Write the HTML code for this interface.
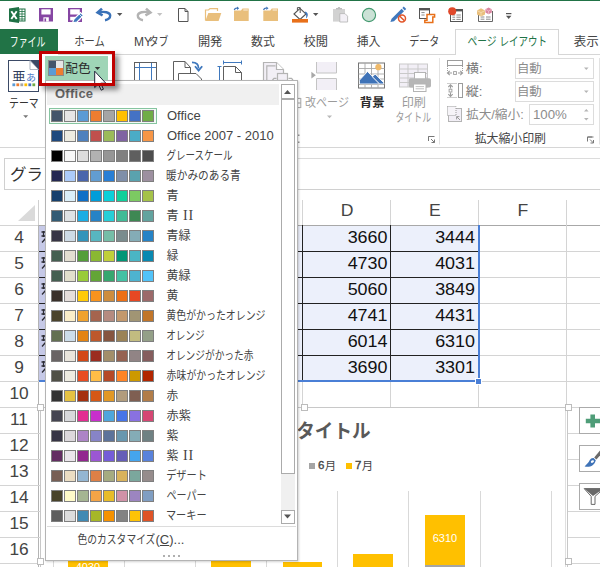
<!DOCTYPE html><html><head><meta charset="utf-8"><title>Excel</title><style>

html,body{margin:0;padding:0;}
body{width:600px;height:567px;overflow:hidden;background:#fff;position:relative;font-family:"Liberation Sans",sans-serif;}
#r{position:absolute;left:0;top:0;width:600px;height:567px;overflow:hidden;}
#r div,#r i{position:absolute;display:block;}
.t{white-space:nowrap;}
.ov{position:absolute;left:0;top:0;}
.ov text{font-family:"Liberation Sans","Noto Sans CJK JP",sans-serif;}
.sw{width:12px;height:12px;box-sizing:border-box;border:1px solid #7f7f7f;}

</style></head><body>
<div id="r">
<div style="left:0px;top:0px;width:600px;height:1px;background:#217346;"></div><div style="left:0px;top:29px;width:58px;height:25px;background:#217346;"></div><div style="left:58px;top:54px;width:542px;height:1px;background:#d6d6d6;"></div><div style="left:455px;top:29px;width:104px;height:26px;background:#fff;border:1px solid #d6d6d6;border-bottom:none;box-sizing:border-box;"></div><div style="left:0px;top:147px;width:600px;height:1px;background:#d6d6d6;"></div><div style="left:64px;top:158px;width:536px;height:1px;background:#dcdcdc;"></div><div style="left:64px;top:189px;width:536px;height:1px;background:#d0d0d0;"></div><div style="left:4px;top:158px;width:60px;height:32px;background:#fff;border:1px solid #d0d0d0;box-sizing:border-box;"></div><div style="left:514.5px;top:57.5px;width:79.5px;height:21.5px;background:#fff;border:1px solid #dcdcdc;box-sizing:border-box;"></div><div style="left:514.5px;top:80.5px;width:79.5px;height:21.5px;background:#fff;border:1px solid #dcdcdc;box-sizing:border-box;"></div><div style="left:528.5px;top:104px;width:65.5px;height:21px;background:#fff;border:1px solid #dcdcdc;box-sizing:border-box;"></div><div class="t " style="left:533px;top:108.5px;font-size:12.5px;line-height:12.5px;color:#8c8c8c;transform:scaleX(1.06);transform-origin:left center;">100%</div><div class="t " style="left:134px;top:35.5px;font-size:12px;line-height:12px;color:#444;">MY</div>
<div style="left:0px;top:225px;width:39px;height:1px;background:#d4d4d4;"></div><div style="left:39px;top:225px;width:561px;height:1px;background:#a8a8a8;"></div><div style="left:38px;top:200px;width:1px;height:25px;background:#d0d0d0;"></div><div style="left:38px;top:225px;width:1px;height:342px;background:#b4b4b4;"></div><div style="left:126px;top:200px;width:1px;height:25px;background:#d4d4d4;"></div><div style="left:214px;top:200px;width:1px;height:25px;background:#d4d4d4;"></div><div style="left:302px;top:200px;width:1px;height:25px;background:#d4d4d4;"></div><div style="left:390px;top:200px;width:1px;height:25px;background:#d4d4d4;"></div><div style="left:478px;top:200px;width:1px;height:25px;background:#d4d4d4;"></div><div style="left:566px;top:200px;width:1px;height:25px;background:#d4d4d4;"></div><div style="left:654px;top:200px;width:1px;height:25px;background:#d4d4d4;"></div><div style="left:0px;top:251px;width:600px;height:1px;background:#d4d4d4;"></div><div style="left:0px;top:277px;width:600px;height:1px;background:#d4d4d4;"></div><div style="left:0px;top:303px;width:600px;height:1px;background:#d4d4d4;"></div><div style="left:0px;top:329px;width:600px;height:1px;background:#d4d4d4;"></div><div style="left:0px;top:355px;width:600px;height:1px;background:#d4d4d4;"></div><div style="left:0px;top:381px;width:600px;height:1px;background:#d4d4d4;"></div><div style="left:0px;top:407px;width:600px;height:1px;background:#d4d4d4;"></div><div style="left:0px;top:433px;width:600px;height:1px;background:#d4d4d4;"></div><div style="left:0px;top:459px;width:600px;height:1px;background:#d4d4d4;"></div><div style="left:0px;top:485px;width:600px;height:1px;background:#d4d4d4;"></div><div style="left:0px;top:511px;width:600px;height:1px;background:#d4d4d4;"></div><div style="left:0px;top:537px;width:600px;height:1px;background:#d4d4d4;"></div><div style="left:0px;top:563px;width:600px;height:1px;background:#d4d4d4;"></div><div style="left:0px;top:589px;width:600px;height:1px;background:#d4d4d4;"></div><div style="left:126px;top:225px;width:1px;height:342px;background:#d4d4d4;"></div><div style="left:214px;top:225px;width:1px;height:342px;background:#d4d4d4;"></div><div style="left:302px;top:225px;width:1px;height:342px;background:#d4d4d4;"></div><div style="left:390px;top:225px;width:1px;height:342px;background:#d4d4d4;"></div><div style="left:478px;top:225px;width:1px;height:342px;background:#d4d4d4;"></div><div style="left:566px;top:225px;width:1px;height:342px;background:#d4d4d4;"></div><div style="left:654px;top:225px;width:1px;height:342px;background:#d4d4d4;"></div><div class="t " style="left:327px;top:203px;font-size:16px;line-height:16px;color:#444;width:40px;text-align:center;transform:scaleX(1.1);">D</div><div class="t " style="left:415px;top:203px;font-size:16px;line-height:16px;color:#444;width:40px;text-align:center;transform:scaleX(1.1);">E</div><div class="t " style="left:503px;top:203px;font-size:16px;line-height:16px;color:#444;width:40px;text-align:center;transform:scaleX(1.1);">F</div><div class="t " style="left:0px;top:230px;font-size:16px;line-height:16px;color:#444;width:38px;text-align:center;transform:scaleX(1.08);">4</div><div class="t " style="left:0px;top:256px;font-size:16px;line-height:16px;color:#444;width:38px;text-align:center;transform:scaleX(1.08);">5</div><div class="t " style="left:0px;top:282px;font-size:16px;line-height:16px;color:#444;width:38px;text-align:center;transform:scaleX(1.08);">6</div><div class="t " style="left:0px;top:308px;font-size:16px;line-height:16px;color:#444;width:38px;text-align:center;transform:scaleX(1.08);">7</div><div class="t " style="left:0px;top:334px;font-size:16px;line-height:16px;color:#444;width:38px;text-align:center;transform:scaleX(1.08);">8</div><div class="t " style="left:0px;top:360px;font-size:16px;line-height:16px;color:#444;width:38px;text-align:center;transform:scaleX(1.08);">9</div><div class="t " style="left:0px;top:386px;font-size:16px;line-height:16px;color:#444;width:38px;text-align:center;transform:scaleX(1.08);">10</div><div class="t " style="left:0px;top:412px;font-size:16px;line-height:16px;color:#444;width:38px;text-align:center;transform:scaleX(1.08);">11</div><div class="t " style="left:0px;top:438px;font-size:16px;line-height:16px;color:#444;width:38px;text-align:center;transform:scaleX(1.08);">12</div><div class="t " style="left:0px;top:464px;font-size:16px;line-height:16px;color:#444;width:38px;text-align:center;transform:scaleX(1.08);">13</div><div class="t " style="left:0px;top:490px;font-size:16px;line-height:16px;color:#444;width:38px;text-align:center;transform:scaleX(1.08);">14</div><div class="t " style="left:0px;top:516px;font-size:16px;line-height:16px;color:#444;width:38px;text-align:center;transform:scaleX(1.08);">15</div><div class="t " style="left:0px;top:542px;font-size:16px;line-height:16px;color:#444;width:38px;text-align:center;transform:scaleX(1.08);">16</div><div style="left:39px;top:226px;width:440px;height:155px;background:#ecf0fb;"></div><div style="left:39px;top:226px;width:8px;height:155px;background:#c6c9e7;"></div><div style="left:39px;top:251px;width:440px;height:1px;background:#222;"></div><div style="left:39px;top:277px;width:440px;height:1px;background:#222;"></div><div style="left:39px;top:303px;width:440px;height:1px;background:#222;"></div><div style="left:39px;top:329px;width:440px;height:1px;background:#222;"></div><div style="left:39px;top:355px;width:440px;height:1px;background:#222;"></div><div style="left:39px;top:381px;width:440px;height:1px;background:#222;"></div><div style="left:302px;top:225px;width:1px;height:156px;background:#222;"></div><div style="left:390px;top:225px;width:1px;height:156px;background:#222;"></div><div class="t " style="left:302px;top:230px;font-size:16px;line-height:16px;color:#111;width:85.5px;text-align:right;transform:scaleX(1.12);transform-origin:right center;">3660</div><div class="t " style="left:390px;top:230px;font-size:16px;line-height:16px;color:#111;width:85px;text-align:right;transform:scaleX(1.12);transform-origin:right center;">3444</div><div class="t " style="left:302px;top:256px;font-size:16px;line-height:16px;color:#111;width:85.5px;text-align:right;transform:scaleX(1.12);transform-origin:right center;">4730</div><div class="t " style="left:390px;top:256px;font-size:16px;line-height:16px;color:#111;width:85px;text-align:right;transform:scaleX(1.12);transform-origin:right center;">4031</div><div class="t " style="left:302px;top:282px;font-size:16px;line-height:16px;color:#111;width:85.5px;text-align:right;transform:scaleX(1.12);transform-origin:right center;">5060</div><div class="t " style="left:390px;top:282px;font-size:16px;line-height:16px;color:#111;width:85px;text-align:right;transform:scaleX(1.12);transform-origin:right center;">3849</div><div class="t " style="left:302px;top:308px;font-size:16px;line-height:16px;color:#111;width:85.5px;text-align:right;transform:scaleX(1.12);transform-origin:right center;">4741</div><div class="t " style="left:390px;top:308px;font-size:16px;line-height:16px;color:#111;width:85px;text-align:right;transform:scaleX(1.12);transform-origin:right center;">4431</div><div class="t " style="left:302px;top:334px;font-size:16px;line-height:16px;color:#111;width:85.5px;text-align:right;transform:scaleX(1.12);transform-origin:right center;">6014</div><div class="t " style="left:390px;top:334px;font-size:16px;line-height:16px;color:#111;width:85px;text-align:right;transform:scaleX(1.12);transform-origin:right center;">6310</div><div class="t " style="left:302px;top:360px;font-size:16px;line-height:16px;color:#111;width:85.5px;text-align:right;transform:scaleX(1.12);transform-origin:right center;">3690</div><div class="t " style="left:390px;top:360px;font-size:16px;line-height:16px;color:#111;width:85px;text-align:right;transform:scaleX(1.12);transform-origin:right center;">3301</div><div style="left:478px;top:225px;width:2px;height:157px;background:#4a7fd6;"></div><div style="left:39px;top:380px;width:441px;height:2px;background:#4a7fd6;"></div><div style="left:475px;top:378px;width:7px;height:7px;background:#fff;"></div><div style="left:476px;top:379px;width:5px;height:5px;background:#4a7fd6;"></div>
<svg class="ov" width="600" height="567" viewBox="0 0 600 567"><text x="9.71" y="46.29" font-size="12.6" fill="#fff" textLength="35.7" lengthAdjust="spacingAndGlyphs">ファイル</text><text x="74.18" y="46.06" font-size="12" fill="#444" textLength="30.5" lengthAdjust="spacingAndGlyphs">ホーム</text><text x="149.12" y="46.06" font-size="12" fill="#444" textLength="19.2" lengthAdjust="spacingAndGlyphs">タブ</text><text x="197.91" y="46.06" font-size="12" fill="#444" textLength="24.4" lengthAdjust="spacingAndGlyphs">開発</text><text x="251.10" y="46.06" font-size="12" fill="#444" textLength="23.8" lengthAdjust="spacingAndGlyphs">数式</text><text x="303.61" y="46.06" font-size="12" fill="#444" textLength="24.4" lengthAdjust="spacingAndGlyphs">校閲</text><text x="356.68" y="46.06" font-size="12" fill="#444" textLength="23.7" lengthAdjust="spacingAndGlyphs">挿入</text><text x="409.15" y="46.06" font-size="12" fill="#444" textLength="30.1" lengthAdjust="spacingAndGlyphs">データ</text><text x="467.49" y="46.06" font-size="12" fill="#217346" textLength="29.1" lengthAdjust="spacingAndGlyphs">ページ</text><text x="499.39" y="46.06" font-size="12" fill="#217346" textLength="47.6" lengthAdjust="spacingAndGlyphs">レイアウト</text><text x="573.65" y="46.06" font-size="12" fill="#444" textLength="25.1" lengthAdjust="spacingAndGlyphs">表示</text><text x="10.04" y="179.58" font-size="16" fill="#333" textLength="33" lengthAdjust="spacingAndGlyphs">グラ</text><path d="M35 205 L35 221 L18 221 Z" fill="#dadada"/><path d="M41.5 232 H45.5 M41.5 236 H45.5 M42 242.5 L45.5 238.5 M43.5 231 V237" stroke="#2b2b33" stroke-width="1.3" fill="none"/><path d="M41.5 258 H45.5 M41.5 262 H45.5 M42 268.5 L45.5 264.5 M43.5 257 V263" stroke="#2b2b33" stroke-width="1.3" fill="none"/><path d="M41.5 284 H45.5 M41.5 288 H45.5 M42 294.5 L45.5 290.5 M43.5 283 V289" stroke="#2b2b33" stroke-width="1.3" fill="none"/><path d="M41.5 310 H45.5 M41.5 314 H45.5 M42 320.5 L45.5 316.5 M43.5 309 V315" stroke="#2b2b33" stroke-width="1.3" fill="none"/><path d="M41.5 336 H45.5 M41.5 340 H45.5 M42 346.5 L45.5 342.5 M43.5 335 V341" stroke="#2b2b33" stroke-width="1.3" fill="none"/><path d="M41.5 362 H45.5 M41.5 366 H45.5 M42 372.5 L45.5 368.5 M43.5 361 V367" stroke="#2b2b33" stroke-width="1.3" fill="none"/><path d="M9 8.6 L19 7 L19 23 L9 21.4 Z" fill="#1e7145"/><path d="M11.3 11.2 L16.7 19 M16.7 11.2 L11.3 19" stroke="#fff" stroke-width="1.9" fill="none"/><rect x="19" y="9" width="6" height="12" fill="#fff" stroke="#1e7145" stroke-width="1"/><path d="M19 11.5H25M19 14H25M19 16.5H25M19 19H25M22 9V21" stroke="#1e7145" stroke-width="0.8" fill="none"/><rect x="39" y="8" width="14" height="13.5" fill="#8646a3"/><rect x="41.4" y="9.3" width="9.2" height="5.2" fill="#fff"/><rect x="43.4" y="17.3" width="5.4" height="4.2" fill="#fff"/><rect x="44.5" y="18.4" width="1.6" height="3.1" fill="#8646a3"/><rect x="68" y="8" width="14" height="14" fill="#8646a3"/><rect x="70.2" y="9.3" width="9.6" height="5.2" fill="#fff"/><rect x="70.2" y="16.8" width="10" height="3.6" fill="#fff"/><path d="M72.5 22.8 L74 19 L80.5 12.5 L83.5 15.5 L77 22 Z" fill="#3f78bd" stroke="#fff" stroke-width="1.2"/><path d="M79 14 L82 17" stroke="#fff" stroke-width="0.8"/><path d="M102 8.6 L97.6 12.6 L102.6 15.4" fill="none" stroke="#3a72b8" stroke-width="2.6" stroke-linejoin="miter"/><path d="M98.5 12.4 C104 11.2 110.2 12.2 110.2 15.6 C110.2 18.6 107.6 19.8 105 20.2" fill="none" stroke="#3a72b8" stroke-width="2.4"/><path d="M117 13 L122.4 13 L119.7 16 Z" fill="#555"/><path d="M146 8.6 L150.4 12.6 L145.4 15.4" fill="none" stroke="#b3b3b3" stroke-width="2.6"/><path d="M149.5 12.4 C144 11.2 137.8 12.2 137.8 15.6 C137.8 18.6 140.4 19.8 143 20.2" fill="none" stroke="#b3b3b3" stroke-width="2.4"/><path d="M157 13 L162.4 13 L159.7 16 Z" fill="#c3c3c3"/><path d="M178.5 8.5 H185 L188 11.5 V21.5 H178.5 Z" fill="#fff" stroke="#555" stroke-width="1"/><path d="M185 8.5 V11.5 H188" fill="none" stroke="#555" stroke-width="1"/><path d="M205.5 20.5 V10 H208.5 L210 8.6 H217.5 V11" fill="none" stroke="#e9bf7c" stroke-width="1.2"/><path d="M205.3 21 L208.3 13 H221.3 L218.6 21 Z" fill="#e9bf7c"/><path d="M234 21 V10.6 H241 L242.5 8.4 H248.7 V21 Z" fill="#e9bf7c"/><path d="M243.3 10 H247.8" stroke="#fff" stroke-width="0.8"/><path d="M234.3 10 C234.8 8.4 236 8 237.4 8.2" fill="none" stroke="#3f73b7" stroke-width="1.3"/><path d="M237 6.4 L239.2 8.2 L237 10 Z" fill="#3f73b7"/><path d="M263.3 21 V10.6 H270.3 L271.8 8.4 H278 V21 Z" fill="#e9bf7c"/><path d="M272.6 10 H277.1" stroke="#fff" stroke-width="0.8"/><path d="M263.6 10 C264.1 8.4 265.3 8 266.7 8.2" fill="none" stroke="#3f73b7" stroke-width="1.3"/><path d="M266.3 6.4 L268.5 8.2 L266.3 10 Z" fill="#3f73b7"/><path d="M294 14 L300 8.4 L306 14 L300 19.4 Z" fill="#fff" stroke="#555" stroke-width="1.1"/><path d="M300.2 13 V7.6 H297.4 V10.4" fill="none" stroke="#555" stroke-width="1"/><path d="M305.6 11.4 C308.6 13 308.4 16.2 306 18.4 C306.4 16 306.4 14 304.6 12.6 Z" fill="#3f78bd"/><rect x="292" y="19" width="16" height="3.6" fill="#e8701a"/><path d="M313 13 L318.4 13 L315.7 16 Z" fill="#555"/><rect x="333" y="9" width="12" height="12.6" fill="#d2d2d2"/><path d="M336 9.4 V8 H337.8 C337.8 6.6 340.2 6.6 340.2 8 H342 V9.4 Z" fill="#bdbdbd"/><path d="M339.8 13.6 H345 L347.6 16.2 V22 H339.8 Z" fill="#f3f0f6" stroke="#b9b9b9" stroke-width="0.9"/><circle cx="369" cy="15" r="6.6" fill="#cbe2d6" stroke="#43996f" stroke-width="1.1"/><path d="M390.4 22 L391.6 18.8 L401.6 8.8 L404 11.2 L394 21.2 Z" fill="#3f78bd"/><path d="M402.4 8 L403.8 6.6 L406.2 9 L404.8 10.4 Z" fill="#3f78bd"/><circle cx="402" cy="18.4" r="3.5" fill="#fff" stroke="#e2572b" stroke-width="1.5"/><path d="M399.6 16 L404.4 20.8" stroke="#e2572b" stroke-width="1.5"/><rect x="419.5" y="8.5" width="10" height="10" fill="#fff" stroke="#555" stroke-width="1"/><rect x="419" y="8" width="11" height="2.4" fill="#555"/><path d="M421.4 12.6 H424.6 M421.4 15 H424.6" stroke="#8a8a8a" stroke-width="1"/><path d="M427 14.6 H434.6 V17 H432.8 V22.4 H424.8 V20.2 H427 Z" fill="#fff" stroke="#e8701a" stroke-width="1.5"/><rect x="450.5" y="9.5" width="12" height="12" fill="#fff" stroke="#555" stroke-width="1"/><rect x="450" y="9" width="13" height="2.4" fill="#555"/><path d="M452.4 15 H455.2 M456.4 15 H460.8 M452.4 17.2 H455.2 M456.4 17.2 H460.8 M452.4 19.4 H455.2 M456.4 19.4 H460.8" stroke="#8a8a8a" stroke-width="1"/><circle cx="452.2" cy="11.2" r="4" fill="#e0482a"/><path d="M478.5 14 V21.5 H492.5 V11" fill="none" stroke="#666" stroke-width="1"/><path d="M480.6 17 H484.4 M486 17 H490.6 M480.6 19.2 H484.4 M486 19.2 H490.6" stroke="#8a8a8a" stroke-width="1"/><path d="M477 10.6 L481 8.2 L485 10.6 V14.6 L481 16.6 L477 14.6 Z" fill="#e9bf7c"/><path d="M477 10.6 L481 12.6 L485 10.6 M481 12.6 V16.6" stroke="#f7e3bf" stroke-width="0.7" fill="none"/><path d="M485.4 9.2 L488.6 7.4 L491.8 9.2 V12.4 L488.6 14.2 L485.4 12.4 Z" fill="#d9849f"/><path d="M485.4 9.2 L488.6 11 L491.8 9.2 M488.6 11 V14.2" stroke="#f3cbd7" stroke-width="0.7" fill="none"/><path d="M506 13.6 H511.4" stroke="#555" stroke-width="1.2"/><path d="M506 15.8 L511.4 15.8 L508.7 19 Z" fill="#555"/><rect x="8.5" y="60.5" width="30" height="31" fill="#fff" stroke="#3b4a66" stroke-width="1"/><path d="M30 60.5 H38.5 V69.5 Z" fill="#3b4a66"/><path d="M30 60.5 V69.5 H38.5 Z" fill="#fff" stroke="#9aa3b3" stroke-width="0.8"/><text x="12.36" y="81.25" font-size="12.5" fill="#2f3e5c" textLength="13.3" lengthAdjust="spacingAndGlyphs">亜</text><text x="25.90" y="81.42" font-size="9" fill="#4472c4" textLength="10" lengthAdjust="spacingAndGlyphs">あ</text><rect x="12.4" y="83.4" width="2.8" height="2.8" fill="#5b9bd5"/><rect x="16.4" y="83.4" width="2.8" height="2.8" fill="#ed7d31"/><rect x="20.4" y="83.4" width="2.8" height="2.8" fill="#a5a5a5"/><rect x="24.4" y="83.4" width="2.8" height="2.8" fill="#ffc000"/><rect x="28.4" y="83.4" width="2.8" height="2.8" fill="#4472c4"/><rect x="32.4" y="83.4" width="2.8" height="2.8" fill="#70ad47"/><text x="9.06" y="108.06" font-size="12" fill="#333" textLength="29.6" lengthAdjust="spacingAndGlyphs">テーマ</text><path d="M23.2 115.2 H28.2 L25.7 118 Z" fill="#777"/><rect x="134.5" y="62.5" width="22" height="28" fill="#fff" stroke="#5f5f5f" stroke-width="1"/><path d="M139.5 63 V90 M151.5 63 V90 M135 67.5 H156" stroke="#3f78bd" stroke-width="1" fill="none"/><path d="M173.5 90 V61.5 H185 L190.5 67.5 V74" fill="#fff" stroke="#5f5f5f" stroke-width="1"/><path d="M185 61.5 V67.5 H190.5" fill="none" stroke="#5f5f5f" stroke-width="1"/><path d="M178.5 90 V73.5 H196 L201.5 79 V90" fill="#fff" stroke="#5f5f5f" stroke-width="1"/><path d="M192 62.4 C196.6 62.4 198.6 64.6 198.6 68.4" fill="none" stroke="#3f78bd" stroke-width="1.8"/><path d="M195 66.2 L198.6 70.6 L202.2 66.2" fill="none" stroke="#3f78bd" stroke-width="1.8"/><path d="M223.5 90 V66.5 H235.5 L241.5 72.5 V90" fill="#fff" stroke="#5f5f5f" stroke-width="1"/><path d="M235.5 66.5 V72.5 H241.5" fill="none" stroke="#5f5f5f" stroke-width="1"/><path d="M223.5 62.5 H241.5 M223.5 60.5 V64.5 M241.5 60.5 V64.5 M219.5 66.5 V90 M217.5 66.5 H221.5" stroke="#3f78bd" stroke-width="1" fill="none"/><path d="M263.5 90 V62.5 H276.5 L283.5 69.5 V90" fill="#f2eff6" stroke="#b4b4b4" stroke-width="1.2"/><path d="M266.8 90 V65.8 H275.5" fill="none" stroke="#b4b4b4" stroke-width="1.2"/><path d="M276.5 62.5 V69.5 H283.5" fill="#fff" stroke="#b4b4b4" stroke-width="1.2"/><rect x="277.5" y="73.5" width="10" height="7" fill="#f2eff6" stroke="#b4b4b4" stroke-width="1.2"/><path d="M272.5 80 L274 78.4 H276.5 M293 80 L291.5 78.4 H288.5" fill="none" stroke="#b0b0b0" stroke-width="1.2"/><rect x="298" y="134.5" width="1.5" height="1.5" fill="#9a9a9a"/><rect x="298" y="141.5" width="1.5" height="1.5" fill="#9a9a9a"/><path d="M300.8 98 V108 M298 98.4 H300.8 M298 107.6 H300.8 M298 103 H300.8" stroke="#a5a5a5" stroke-width="1" fill="none"/><path d="M316.5 62 V73 H336.5 V62" fill="#f2eff6" stroke="#c4c4c4" stroke-width="1"/><path d="M316.5 90 V78.5 H336.5 V90" fill="#f2eff6" stroke="#c4c4c4" stroke-width="1"/><path d="M311.4 71.8 L315.8 75.2 L311.4 78.6 Z" fill="#a8a8a8"/><text x="305.10" y="107.26" font-size="12" fill="#9b9b9b" textLength="43.8" lengthAdjust="spacingAndGlyphs">改ページ</text><path d="M327 115.6 H332 L329.5 118.2 Z" fill="#b9b9b9"/><rect x="358.5" y="63" width="26" height="25" fill="#fff" stroke="#747474" stroke-width="1"/><path d="M358.5 68.5 H384.5 M358.5 74 H384.5 M358.5 79 H384.5 M365 63 V88 M371.5 63 V88 M378 63 V88" stroke="#a8a8a8" stroke-width="0.9" fill="none"/><path d="M358.5 84.5 H384.5" stroke="#8e8e8e" stroke-width="1" fill="none"/><path d="M359.4 84 V80.2 L367.5 71.5 L379.8 84 Z" fill="#3f73b7" stroke="#fff" stroke-width="0.9"/><path d="M372.4 76.8 L375.2 74 L383.8 82.8 V84 H379.6 Z" fill="#3f73b7" stroke="#fff" stroke-width="0.9"/><circle cx="378.4" cy="67.2" r="3.1" fill="#f0ba6a"/><text x="359.83" y="107.06" font-size="12" font-weight="bold" fill="#2b2b2b" textLength="24.7" lengthAdjust="spacingAndGlyphs">背景</text><rect x="399.5" y="64" width="28" height="23" fill="#f2eff6" stroke="#c9c9c9" stroke-width="1"/><path d="M399.5 69 H427.5 M399.5 73.5 H427.5 M399.5 78 H427.5 M399.5 82.5 H427.5 M408 64 V87 M418 64 V87" stroke="#c9c9c9" stroke-width="1" fill="none"/><rect x="414.5" y="72.5" width="11" height="7" fill="#fff" stroke="#b4b4b4" stroke-width="1"/><rect x="408.8" y="78.2" width="22.2" height="9.4" rx="1.8" fill="#b6b6b6"/><rect x="413.5" y="84" width="12.5" height="7.5" fill="#fff" stroke="#b4b4b4" stroke-width="1"/><path d="M415.6 86.6 H424 M415.6 88.8 H424" stroke="#bcbcbc" stroke-width="0.9"/><text x="401.75" y="107.06" font-size="12" fill="#9b9b9b" textLength="24.2" lengthAdjust="spacingAndGlyphs">印刷</text><text x="395.48" y="122.06" font-size="12" fill="#9b9b9b" textLength="35.6" lengthAdjust="spacingAndGlyphs">タイトル</text><path d="M434.5 136.5 V136.5 H428.5" fill="none" stroke="#777" stroke-width="1"/><path d="M433 136.5 H428.5 V141" fill="none" stroke="#777" stroke-width="1"/><path d="M431 139 L434.5 142.5 M431.5 142.5 H434.5 V139.5" fill="none" stroke="#777" stroke-width="1"/><path d="M593.5 137 V137 H587.5" fill="none" stroke="#777" stroke-width="1"/><path d="M592 137 H587.5 V141.5" fill="none" stroke="#777" stroke-width="1"/><path d="M590 139.5 L593.5 143 M590.5 143 H593.5 V140" fill="none" stroke="#777" stroke-width="1"/><path d="M439.5 58 V144.5 M599.5 58 V144.5" stroke="#e2e2e2" stroke-width="1"/><rect x="447.5" y="60.5" width="15" height="5" fill="#fff" stroke="#9c9c9c" stroke-width="1"/><path d="M447.5 66 V71 M462.5 66 V71" stroke="#9c9c9c" stroke-width="1" stroke-dasharray="1 1" fill="none"/><path d="M447.4 73 H452 M458 73 H462.6 M449.8 70.8 L447.4 73 L449.8 75.2 M460.2 70.8 L462.6 73 L460.2 75.2" fill="none" stroke="#9c9c9c" stroke-width="1.1"/><rect x="453.6" y="71.6" width="2.8" height="2.8" fill="#fff" stroke="#9c9c9c" stroke-width="0.9"/><rect x="458.5" y="83.5" width="4" height="14" fill="#fff" stroke="#9c9c9c" stroke-width="1"/><path d="M447.5 83.5 H457.5 M447.5 97.5 H457.5" stroke="#9c9c9c" stroke-width="1" stroke-dasharray="1 1" fill="none"/><path d="M450.5 85 V88.6 M450.5 92.6 V96.4 M448.3 87 L450.5 84.8 L452.7 87 M448.3 94.2 L450.5 96.4 L452.7 94.2" fill="none" stroke="#9c9c9c" stroke-width="1.1"/><rect x="449.1" y="89.2" width="2.8" height="2.8" fill="#fff" stroke="#9c9c9c" stroke-width="0.9"/><rect x="448.5" y="108.5" width="13" height="13" fill="#f2eff6" stroke="#b4b4b4" stroke-width="1"/><rect x="447.5" y="106.5" width="8.5" height="9" fill="#f6f4f8" stroke="#9c9c9c" stroke-width="1" stroke-dasharray="1 1"/><path d="M460 120 L456.8 116.8 M456.6 119.4 V116.6 H459.4" fill="none" stroke="#9c9c9c" stroke-width="1"/><text x="465.84" y="72.86" font-size="12" fill="#767676" textLength="16.8" lengthAdjust="spacingAndGlyphs">横:</text><text x="465.72" y="95.86" font-size="12" fill="#767676" textLength="16.8" lengthAdjust="spacingAndGlyphs">縦:</text><text x="465.97" y="119.06" font-size="12" fill="#8c8c8c" textLength="57.7" lengthAdjust="spacingAndGlyphs">拡大/縮小:</text><text x="516.98" y="73.06" font-size="12" fill="#8c8c8c" textLength="24.8" lengthAdjust="spacingAndGlyphs">自動</text><text x="516.98" y="96.06" font-size="12" fill="#8c8c8c" textLength="24.8" lengthAdjust="spacingAndGlyphs">自動</text><path d="M584 67.5 H588.6 L586.3 70 Z M584 90.5 H588.6 L586.3 93 Z" fill="#b5b5b5"/><path d="M584 111.4 H588.6 L586.3 109 Z M584 118 H588.6 L586.3 120.4 Z" fill="#b5b5b5"/><text x="474.68" y="142.56" font-size="12" fill="#444" textLength="71.3" lengthAdjust="spacingAndGlyphs">拡大縮小印刷</text></svg>
<div style="left:40px;top:407px;width:528px;height:320px;background:#fff;border:1px solid #c8c8c8;box-sizing:border-box;"></div><div style="left:565px;top:408px;width:1px;height:160px;background:#e0e0e0;"></div><div style="left:53px;top:491px;width:1px;height:80px;background:#d9d9d9;"></div><div style="left:124px;top:491px;width:1px;height:80px;background:#d9d9d9;"></div><div style="left:195px;top:491px;width:1px;height:80px;background:#d9d9d9;"></div><div style="left:266px;top:491px;width:1px;height:80px;background:#d9d9d9;"></div><div style="left:337px;top:491px;width:1px;height:80px;background:#d9d9d9;"></div><div style="left:408px;top:491px;width:1px;height:80px;background:#d9d9d9;"></div><div style="left:480px;top:491px;width:1px;height:80px;background:#d9d9d9;"></div><div style="left:551px;top:491px;width:1px;height:80px;background:#d9d9d9;"></div><div style="left:68px;top:561px;width:39.5px;height:60px;background:#ffc000;"></div><div style="left:211px;top:561px;width:39.5px;height:60px;background:#ffc000;"></div><div style="left:282.5px;top:562px;width:39.5px;height:60px;background:#ffc000;"></div><div style="left:353px;top:554px;width:39.5px;height:60px;background:#ffc000;"></div><div style="left:425px;top:515px;width:39.5px;height:60px;background:#ffc000;"></div><div style="left:425px;top:565px;width:39.5px;height:4px;background:#a5a5a5;"></div><div class="t " style="left:425px;top:533px;font-size:11px;line-height:11px;color:#fff;width:40px;text-align:center;">6310</div><div class="t " style="left:68px;top:562px;font-size:11px;line-height:11px;color:#fff;width:40px;text-align:center;">4030</div><div style="left:309px;top:463px;width:6px;height:6px;background:#a5a5a5;"></div><div style="left:346px;top:463px;width:6px;height:6px;background:#ffc000;"></div><div class="t " style="left:318px;top:460px;font-size:11.5px;line-height:11.5px;color:#444;-webkit-text-stroke:0.35px #444;">6</div><div class="t " style="left:355px;top:460px;font-size:11.5px;line-height:11.5px;color:#444;-webkit-text-stroke:0.35px #444;">7</div><div style="left:301px;top:404px;width:7px;height:7px;background:#fff;border:1px solid #bcbcbc;box-sizing:border-box;"></div><div style="left:565px;top:404px;width:7px;height:7px;background:#fff;border:1px solid #bcbcbc;box-sizing:border-box;"></div><div style="left:565px;top:558px;width:7px;height:7px;background:#fff;border:1px solid #bcbcbc;box-sizing:border-box;"></div><div style="left:37px;top:404px;width:7px;height:7px;background:#fff;border:1px solid #bcbcbc;box-sizing:border-box;"></div><div style="left:37px;top:558px;width:7px;height:7px;background:#fff;border:1px solid #bcbcbc;box-sizing:border-box;"></div><div style="left:579px;top:407px;width:30px;height:27px;background:#fff;border:1px solid #ababab;box-sizing:border-box;"></div><div style="left:579px;top:445px;width:30px;height:27px;background:#fff;border:1px solid #ababab;box-sizing:border-box;"></div><div style="left:579px;top:483px;width:30px;height:27px;background:#fff;border:1px solid #ababab;box-sizing:border-box;"></div>
<svg class="ov" width="600" height="567" viewBox="0 0 600 567"><text x="324.67" y="469.68" font-size="11" fill="#444" textLength="11.4" lengthAdjust="spacingAndGlyphs">月</text><text x="361.67" y="469.68" font-size="11" fill="#444" textLength="11.4" lengthAdjust="spacingAndGlyphs">月</text><text x="235.28" y="438.22" font-size="19" font-weight="bold" fill="#595959" textLength="135.3" lengthAdjust="spacingAndGlyphs">グラフ タイトル</text><path d="M590.4 414.4 H595 V418.7 H600 V423.3 H595 V427.6 H590.4 V423.3 H585.8 V418.7 H590.4 Z" fill="#4f9d78"/><path d="M600 450.4 L594.2 457.4 L596.4 459.4 L600 455.6 Z" fill="#6a6a6a"/><path d="M593.6 458 C590 457.6 589.6 461.6 587.4 463.6 C586.4 464.6 585.4 465.4 584.6 466.4 C589.6 467.4 594.4 466 595.8 460.2 Z" fill="#3f73b7"/><ellipse cx="592.4" cy="461.6" rx="1.7" ry="1.2" fill="#fff" transform="rotate(-35 592.4 461.6)"/><path d="M584.2 488.6 H600 V492 L595 496.4 V504.4 H591.2 V496.4 Z" fill="#fff" stroke="#6a6a6a" stroke-width="1"/><path d="M584.2 488.6 H600 V491 L593 496 Z" fill="#6a6a6a"/></svg>
<div style="left:45px;top:80px;width:253px;height:481px;background:#fff;border:1px solid #b4b4b4;box-sizing:border-box;box-shadow:1px 1px 2px rgba(0,0,0,.18);"></div><div style="left:47px;top:84px;width:232px;height:21px;background:#f0f0f0;"></div><div class="t " style="left:55px;top:87px;font-size:13px;line-height:13px;color:#666;font-weight:bold;letter-spacing:0.25px;">Office</div><div style="left:49px;top:108px;width:108px;height:16px;background:#f3faf6;border:1px solid #86c5a0;box-sizing:border-box;"></div><i class="sw" style="left:51px;top:110px;background:#44546A"></i><i class="sw" style="left:64px;top:110px;background:#E7E6E6"></i><i class="sw" style="left:77px;top:110px;background:#5B9BD5"></i><i class="sw" style="left:90px;top:110px;background:#ED7D31"></i><i class="sw" style="left:103px;top:110px;background:#A5A5A5"></i><i class="sw" style="left:116px;top:110px;background:#FFC000"></i><i class="sw" style="left:129px;top:110px;background:#4472C4"></i><i class="sw" style="left:142px;top:110px;background:#70AD47"></i><div class="t " style="left:167px;top:109px;font-size:13px;line-height:13px;color:#444;">Office</div><i class="sw" style="left:51px;top:130px;background:#1F497D"></i><i class="sw" style="left:64px;top:130px;background:#EEECE1"></i><i class="sw" style="left:77px;top:130px;background:#4F81BD"></i><i class="sw" style="left:90px;top:130px;background:#C0504D"></i><i class="sw" style="left:103px;top:130px;background:#9BBB59"></i><i class="sw" style="left:116px;top:130px;background:#8064A2"></i><i class="sw" style="left:129px;top:130px;background:#4BACC6"></i><i class="sw" style="left:142px;top:130px;background:#F79646"></i><div class="t " style="left:167px;top:129px;font-size:13px;line-height:13px;color:#444;">Office 2007 - 2010</div><i class="sw" style="left:51px;top:150px;background:#000000"></i><i class="sw" style="left:64px;top:150px;background:#F8F8F8"></i><i class="sw" style="left:77px;top:150px;background:#DDDDDD"></i><i class="sw" style="left:90px;top:150px;background:#B2B2B2"></i><i class="sw" style="left:103px;top:150px;background:#969696"></i><i class="sw" style="left:116px;top:150px;background:#808080"></i><i class="sw" style="left:129px;top:150px;background:#5F5F5F"></i><i class="sw" style="left:142px;top:150px;background:#4D4D4D"></i><i class="sw" style="left:51px;top:170px;background:#242852"></i><i class="sw" style="left:64px;top:170px;background:#ACCBF9"></i><i class="sw" style="left:77px;top:170px;background:#4A66AC"></i><i class="sw" style="left:90px;top:170px;background:#629DD1"></i><i class="sw" style="left:103px;top:170px;background:#297FD5"></i><i class="sw" style="left:116px;top:170px;background:#7F8FA9"></i><i class="sw" style="left:129px;top:170px;background:#5AA2AE"></i><i class="sw" style="left:142px;top:170px;background:#9D90A0"></i><i class="sw" style="left:51px;top:190px;background:#17406D"></i><i class="sw" style="left:64px;top:190px;background:#DBEFF9"></i><i class="sw" style="left:77px;top:190px;background:#0F6FC6"></i><i class="sw" style="left:90px;top:190px;background:#009DD9"></i><i class="sw" style="left:103px;top:190px;background:#0BD0D9"></i><i class="sw" style="left:116px;top:190px;background:#10CF9B"></i><i class="sw" style="left:129px;top:190px;background:#7CCA62"></i><i class="sw" style="left:142px;top:190px;background:#A5C249"></i><i class="sw" style="left:51px;top:210px;background:#335B74"></i><i class="sw" style="left:64px;top:210px;background:#DFE3E5"></i><i class="sw" style="left:77px;top:210px;background:#1CADE4"></i><i class="sw" style="left:90px;top:210px;background:#2683C6"></i><i class="sw" style="left:103px;top:210px;background:#27CED7"></i><i class="sw" style="left:116px;top:210px;background:#42BA97"></i><i class="sw" style="left:129px;top:210px;background:#3E8853"></i><i class="sw" style="left:142px;top:210px;background:#62A39F"></i><div class="t " style="left:183px;top:208.5px;font-size:14px;line-height:14px;color:#444;font-family:&quot;Liberation Serif&quot;,serif;letter-spacing:0.8px;">II</div><i class="sw" style="left:51px;top:230px;background:#373545"></i><i class="sw" style="left:64px;top:230px;background:#CEDBE6"></i><i class="sw" style="left:77px;top:230px;background:#3494BA"></i><i class="sw" style="left:90px;top:230px;background:#58B6C0"></i><i class="sw" style="left:103px;top:230px;background:#75BDA7"></i><i class="sw" style="left:116px;top:230px;background:#7A8C8E"></i><i class="sw" style="left:129px;top:230px;background:#84ACB6"></i><i class="sw" style="left:142px;top:230px;background:#2683C6"></i><i class="sw" style="left:51px;top:250px;background:#455F51"></i><i class="sw" style="left:64px;top:250px;background:#E3DED1"></i><i class="sw" style="left:77px;top:250px;background:#549E39"></i><i class="sw" style="left:90px;top:250px;background:#8AB833"></i><i class="sw" style="left:103px;top:250px;background:#C0CF3A"></i><i class="sw" style="left:116px;top:250px;background:#029676"></i><i class="sw" style="left:129px;top:250px;background:#4AB5C4"></i><i class="sw" style="left:142px;top:250px;background:#0989B1"></i><i class="sw" style="left:51px;top:270px;background:#455F51"></i><i class="sw" style="left:64px;top:270px;background:#E2DFCC"></i><i class="sw" style="left:77px;top:270px;background:#99CB38"></i><i class="sw" style="left:90px;top:270px;background:#63A537"></i><i class="sw" style="left:103px;top:270px;background:#37A76F"></i><i class="sw" style="left:116px;top:270px;background:#44C1A3"></i><i class="sw" style="left:129px;top:270px;background:#4EB3CF"></i><i class="sw" style="left:142px;top:270px;background:#51C3F9"></i><i class="sw" style="left:51px;top:290px;background:#39302A"></i><i class="sw" style="left:64px;top:290px;background:#E5DEDB"></i><i class="sw" style="left:77px;top:290px;background:#FFCA08"></i><i class="sw" style="left:90px;top:290px;background:#F8931D"></i><i class="sw" style="left:103px;top:290px;background:#CE8D3E"></i><i class="sw" style="left:116px;top:290px;background:#EC7016"></i><i class="sw" style="left:129px;top:290px;background:#E64823"></i><i class="sw" style="left:142px;top:290px;background:#9C6A6A"></i><i class="sw" style="left:51px;top:310px;background:#4B442C"></i><i class="sw" style="left:64px;top:310px;background:#FBEEC9"></i><i class="sw" style="left:77px;top:310px;background:#F0A22E"></i><i class="sw" style="left:90px;top:310px;background:#A5644E"></i><i class="sw" style="left:103px;top:310px;background:#B58B80"></i><i class="sw" style="left:116px;top:310px;background:#C3986D"></i><i class="sw" style="left:129px;top:310px;background:#A19574"></i><i class="sw" style="left:142px;top:310px;background:#C17529"></i><i class="sw" style="left:51px;top:330px;background:#637052"></i><i class="sw" style="left:64px;top:330px;background:#CCDDEA"></i><i class="sw" style="left:77px;top:330px;background:#E48312"></i><i class="sw" style="left:90px;top:330px;background:#BD582C"></i><i class="sw" style="left:103px;top:330px;background:#865640"></i><i class="sw" style="left:116px;top:330px;background:#9B8357"></i><i class="sw" style="left:129px;top:330px;background:#C2BC80"></i><i class="sw" style="left:142px;top:330px;background:#94A088"></i><i class="sw" style="left:51px;top:350px;background:#696464"></i><i class="sw" style="left:64px;top:350px;background:#E9E5DC"></i><i class="sw" style="left:77px;top:350px;background:#D34817"></i><i class="sw" style="left:90px;top:350px;background:#9B2D1F"></i><i class="sw" style="left:103px;top:350px;background:#A28E6A"></i><i class="sw" style="left:116px;top:350px;background:#956251"></i><i class="sw" style="left:129px;top:350px;background:#918485"></i><i class="sw" style="left:142px;top:350px;background:#855D5D"></i><i class="sw" style="left:51px;top:370px;background:#505046"></i><i class="sw" style="left:64px;top:370px;background:#EEECE1"></i><i class="sw" style="left:77px;top:370px;background:#E84C22"></i><i class="sw" style="left:90px;top:370px;background:#FFBD47"></i><i class="sw" style="left:103px;top:370px;background:#B64926"></i><i class="sw" style="left:116px;top:370px;background:#FF8427"></i><i class="sw" style="left:129px;top:370px;background:#CC9900"></i><i class="sw" style="left:142px;top:370px;background:#B22600"></i><i class="sw" style="left:51px;top:390px;background:#323232"></i><i class="sw" style="left:64px;top:390px;background:#E5C243"></i><i class="sw" style="left:77px;top:390px;background:#A5300F"></i><i class="sw" style="left:90px;top:390px;background:#D55816"></i><i class="sw" style="left:103px;top:390px;background:#E19825"></i><i class="sw" style="left:116px;top:390px;background:#B19C7D"></i><i class="sw" style="left:129px;top:390px;background:#7F5F52"></i><i class="sw" style="left:142px;top:390px;background:#B27D49"></i><i class="sw" style="left:51px;top:410px;background:#454551"></i><i class="sw" style="left:64px;top:410px;background:#D8D9DC"></i><i class="sw" style="left:77px;top:410px;background:#E32D91"></i><i class="sw" style="left:90px;top:410px;background:#C830CC"></i><i class="sw" style="left:103px;top:410px;background:#4EA6DC"></i><i class="sw" style="left:116px;top:410px;background:#4775E7"></i><i class="sw" style="left:129px;top:410px;background:#8971E1"></i><i class="sw" style="left:142px;top:410px;background:#D54773"></i><i class="sw" style="left:51px;top:430px;background:#373545"></i><i class="sw" style="left:64px;top:430px;background:#DCD8DC"></i><i class="sw" style="left:77px;top:430px;background:#AD84C6"></i><i class="sw" style="left:90px;top:430px;background:#8784C7"></i><i class="sw" style="left:103px;top:430px;background:#5D739A"></i><i class="sw" style="left:116px;top:430px;background:#6997AF"></i><i class="sw" style="left:129px;top:430px;background:#84ACB6"></i><i class="sw" style="left:142px;top:430px;background:#6F8183"></i><i class="sw" style="left:51px;top:450px;background:#632E62"></i><i class="sw" style="left:64px;top:450px;background:#EAE5EB"></i><i class="sw" style="left:77px;top:450px;background:#92278F"></i><i class="sw" style="left:90px;top:450px;background:#9B57D3"></i><i class="sw" style="left:103px;top:450px;background:#755DD9"></i><i class="sw" style="left:116px;top:450px;background:#665EB8"></i><i class="sw" style="left:129px;top:450px;background:#45A5ED"></i><i class="sw" style="left:142px;top:450px;background:#5982DB"></i><div class="t " style="left:183px;top:448.5px;font-size:14px;line-height:14px;color:#444;font-family:&quot;Liberation Serif&quot;,serif;letter-spacing:0.8px;">II</div><i class="sw" style="left:51px;top:470px;background:#775F55"></i><i class="sw" style="left:64px;top:470px;background:#EBDDC3"></i><i class="sw" style="left:77px;top:470px;background:#94B6D2"></i><i class="sw" style="left:90px;top:470px;background:#DD8047"></i><i class="sw" style="left:103px;top:470px;background:#A5AB81"></i><i class="sw" style="left:116px;top:470px;background:#D8B25C"></i><i class="sw" style="left:129px;top:470px;background:#7BA79D"></i><i class="sw" style="left:142px;top:470px;background:#968C8C"></i><i class="sw" style="left:51px;top:490px;background:#48432A"></i><i class="sw" style="left:64px;top:490px;background:#FEFAC9"></i><i class="sw" style="left:77px;top:490px;background:#A5B592"></i><i class="sw" style="left:90px;top:490px;background:#F3A447"></i><i class="sw" style="left:103px;top:490px;background:#E7BC29"></i><i class="sw" style="left:116px;top:490px;background:#D092A7"></i><i class="sw" style="left:129px;top:490px;background:#9C85C0"></i><i class="sw" style="left:142px;top:490px;background:#809EC2"></i><i class="sw" style="left:51px;top:510px;background:#5E5E5E"></i><i class="sw" style="left:64px;top:510px;background:#DDDDDD"></i><i class="sw" style="left:77px;top:510px;background:#418AB3"></i><i class="sw" style="left:90px;top:510px;background:#A6B727"></i><i class="sw" style="left:103px;top:510px;background:#F69200"></i><i class="sw" style="left:116px;top:510px;background:#838383"></i><i class="sw" style="left:129px;top:510px;background:#FEC306"></i><i class="sw" style="left:142px;top:510px;background:#DF5327"></i><div style="left:280.5px;top:84px;width:14px;height:440px;background:#f0f0f0;"></div><div style="left:280.5px;top:84px;width:14px;height:15px;background:#fff;border:1px solid #ababab;box-sizing:border-box;"></div><div style="left:280.5px;top:99px;width:14px;height:375px;background:#fff;border:1px solid #ababab;box-sizing:border-box;"></div><div style="left:280.5px;top:509.5px;width:14px;height:14px;background:#fff;border:1px solid #ababab;box-sizing:border-box;"></div><div style="left:47px;top:526px;width:249px;height:1px;background:#dcdcdc;"></div><div class="t " style="left:155.5px;top:533px;font-size:13px;line-height:13px;color:#444;">(<u>C</u>)...</div><div style="left:162.5px;top:555px;width:2px;height:2px;background:#b0b0b0;"></div><div style="left:167.5px;top:555px;width:2px;height:2px;background:#b0b0b0;"></div><div style="left:172.5px;top:555px;width:2px;height:2px;background:#b0b0b0;"></div><div style="left:177.5px;top:555px;width:2px;height:2px;background:#b0b0b0;"></div>
<svg class="ov" width="600" height="567" viewBox="0 0 600 567"><text x="166.45" y="160.16" font-size="12" fill="#444" textLength="66" lengthAdjust="spacingAndGlyphs">グレースケール</text><text x="166.06" y="180.16" font-size="12" fill="#444" textLength="74.7" lengthAdjust="spacingAndGlyphs">暖かみのある青</text><text x="166.26" y="200.16" font-size="12" fill="#444" textLength="12.5" lengthAdjust="spacingAndGlyphs">青</text><text x="166.26" y="220.16" font-size="12" fill="#444" textLength="12.5" lengthAdjust="spacingAndGlyphs">青</text><text x="166.27" y="240.16" font-size="12" fill="#444" textLength="24.6" lengthAdjust="spacingAndGlyphs">青緑</text><text x="166.70" y="260.16" font-size="12" fill="#444" textLength="11.7" lengthAdjust="spacingAndGlyphs">緑</text><text x="166.32" y="280.16" font-size="12" fill="#444" textLength="24.6" lengthAdjust="spacingAndGlyphs">黄緑</text><text x="166.32" y="300.16" font-size="12" fill="#444" textLength="12.3" lengthAdjust="spacingAndGlyphs">黄</text><text x="166.34" y="320.16" font-size="12" fill="#444" textLength="99.2" lengthAdjust="spacingAndGlyphs">黄色がかったオレンジ</text><text x="166.18" y="340.16" font-size="12" fill="#444" textLength="38.4" lengthAdjust="spacingAndGlyphs">オレンジ</text><text x="166.19" y="360.16" font-size="12" fill="#444" textLength="87.2" lengthAdjust="spacingAndGlyphs">オレンジがかった赤</text><text x="166.62" y="380.16" font-size="12" fill="#444" textLength="98.9" lengthAdjust="spacingAndGlyphs">赤味がかったオレンジ</text><text x="166.62" y="400.16" font-size="12" fill="#444" textLength="11.7" lengthAdjust="spacingAndGlyphs">赤</text><text x="166.61" y="420.16" font-size="12" fill="#444" textLength="24.4" lengthAdjust="spacingAndGlyphs">赤紫</text><text x="166.51" y="440.16" font-size="12" fill="#444" textLength="12" lengthAdjust="spacingAndGlyphs">紫</text><text x="166.51" y="460.16" font-size="12" fill="#444" textLength="12" lengthAdjust="spacingAndGlyphs">紫</text><text x="166.13" y="480.16" font-size="12" fill="#444" textLength="40.9" lengthAdjust="spacingAndGlyphs">デザート</text><text x="166.47" y="500.16" font-size="12" fill="#444" textLength="40.1" lengthAdjust="spacingAndGlyphs">ペーパー</text><text x="165.95" y="520.16" font-size="12" fill="#444" textLength="40.6" lengthAdjust="spacingAndGlyphs">マーキー</text><path d="M284 94 L291 94 L287.5 90 Z" fill="#555"/><path d="M284 514.5 L291 514.5 L287.5 518.5 Z" fill="#555"/><text x="77.58" y="544.06" font-size="12" fill="#444" textLength="77.8" lengthAdjust="spacingAndGlyphs">色のカスタマイズ</text></svg>
<div style="left:45px;top:56px;width:62.5px;height:24px;background:#9fd5b7;"></div>
<svg class="ov" width="600" height="567" viewBox="0 0 600 567"><rect x="48.5" y="60.5" width="15" height="15" fill="#fff" stroke="#8a8a8a"/><rect x="49" y="61" width="7" height="7" fill="#44546a"/><rect x="56" y="61" width="7" height="7" fill="#e7e6e6"/><rect x="49" y="68" width="7" height="7" fill="#5b9bd5"/><rect x="56" y="68" width="7" height="7" fill="#ed7d31"/><text x="65.28" y="73.45" font-size="12.5" fill="#2b2b2b" textLength="25.3" lengthAdjust="spacingAndGlyphs">配色</text><path d="M94.8 67 L100.2 67 L97.5 70 Z" fill="#333"/><path d="M94.7 71.2 L94.7 87.6 L98.4 84 L101.2 90.2 L103.4 89.2 L100.8 83.2 L105.8 83.2 Z" fill="#fff" stroke="#10102a" stroke-width="0.9" stroke-linejoin="miter"/></svg>
<div style="left:39px;top:51px;width:76px;height:35px;border:3px solid #c00000;box-sizing:border-box;box-shadow:4px 4px 5px rgba(0,0,0,.42);"></div>
</div></body></html>
